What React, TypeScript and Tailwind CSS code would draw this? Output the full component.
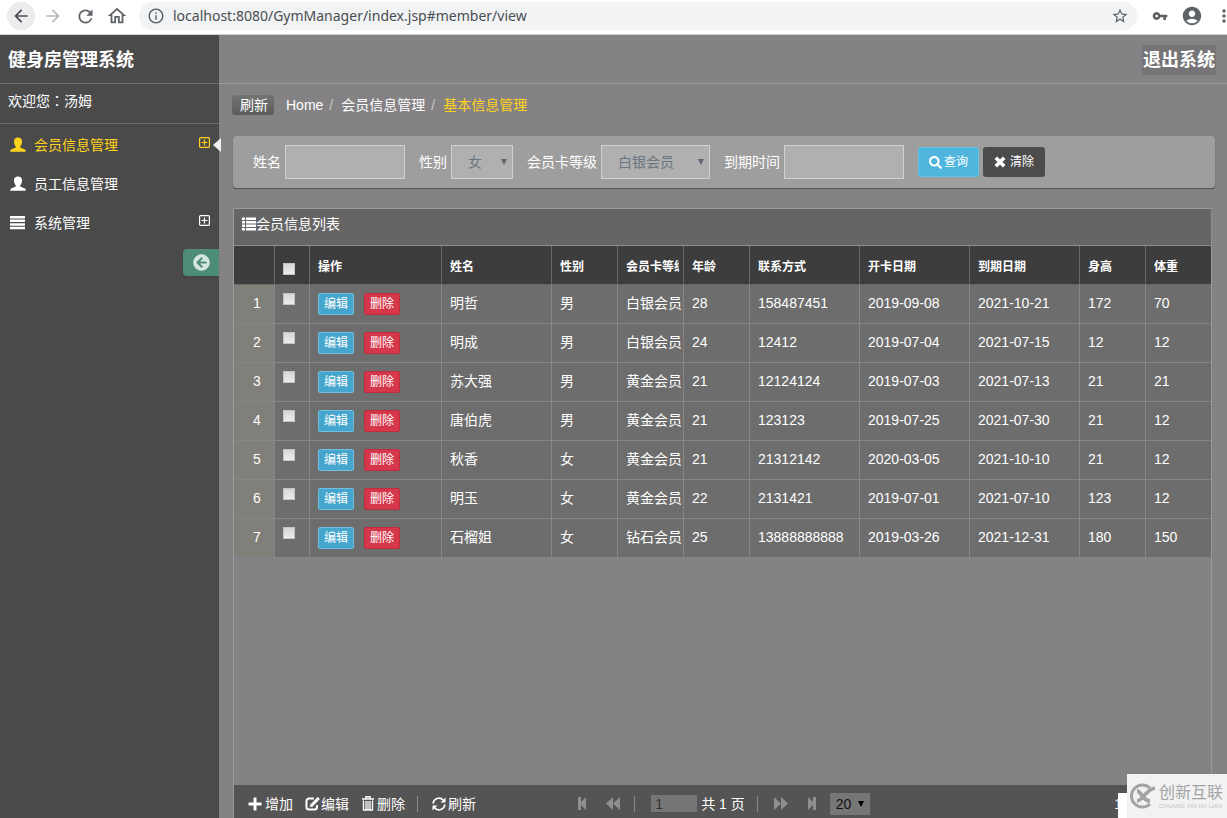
import { useState } from "react";
import type { ReactNode } from "react";
import {
  MdAccountCircle,
  MdArrowBack,
  MdArrowForward,
  MdInfoOutline,
  MdMoreVert,
  MdOutlineHome,
  MdRefresh,
  MdStarBorder,
  MdVpnKey,
} from "react-icons/md";
import { FaArrowCircleLeft, FaSearch } from "react-icons/fa";

interface Member {
  name: string;
  gender: string;
  level: string;
  age: number;
  phone: string;
  openDate: string;
  expireDate: string;
  height: number;
  weight: number;
}

const members: Member[] = [
  { name: "明哲", gender: "男", level: "白银会员", age: 28, phone: "158487451", openDate: "2019-09-08", expireDate: "2021-10-21", height: 172, weight: 70 },
  { name: "明成", gender: "男", level: "白银会员", age: 24, phone: "12412", openDate: "2019-07-04", expireDate: "2021-07-15", height: 12, weight: 12 },
  { name: "苏大强", gender: "男", level: "黄金会员", age: 21, phone: "12124124", openDate: "2019-07-03", expireDate: "2021-07-13", height: 21, weight: 21 },
  { name: "唐伯虎", gender: "男", level: "黄金会员", age: 21, phone: "123123", openDate: "2019-07-25", expireDate: "2021-07-30", height: 21, weight: 12 },
  { name: "秋香", gender: "女", level: "黄金会员", age: 21, phone: "21312142", openDate: "2020-03-05", expireDate: "2021-10-10", height: 21, weight: 12 },
  { name: "明玉", gender: "女", level: "黄金会员", age: 22, phone: "2131421", openDate: "2019-07-01", expireDate: "2021-07-10", height: 123, weight: 12 },
  { name: "石榴姐", gender: "女", level: "钻石会员", age: 25, phone: "13888888888", openDate: "2019-03-26", expireDate: "2021-12-31", height: 180, weight: 150 },
];

const columns = [
  { label: "姓名", width: "w-[110px]" },
  { label: "性别", width: "w-[66px]" },
  { label: "会员卡等级", width: "w-[66px]" },
  { label: "年龄", width: "w-[66px]" },
  { label: "联系方式", width: "w-[110px]" },
  { label: "开卡日期", width: "w-[110px]" },
  { label: "到期日期", width: "w-[110px]" },
  { label: "身高", width: "w-[66px]" },
  { label: "体重", width: "" },
];

const UserIcon = () => (
  <svg viewBox="0 0 16 16" className="size-4" fill="currentColor">
    <path d="M8 .5C5.400.500 4 2 4 4.300c0 2 .5 3.900 1.600 5 .4.500.3 1.100-.3 1.400L1.600 12.300C.8 12.700.3 13.300.3 14v.700h15.400V14c0-.7-.5-1.300-1.300-1.700l-3.700-1.600c-.6-.3-.7-.9-.3-1.400 1.100-1.100 1.600-3 1.600-5C12 2 10.600.5 8 .5z" />
  </svg>
);

const LinesIcon = () => (
  <svg viewBox="0 0 16 16" className="size-4" fill="currentColor">
    <path d="M0 1h15v2.500H0zM0 4.600h15v2.500H0zM0 8.200h15v2.500H0zM0 11.800h15v2.500H0z" />
  </svg>
);

const ListIcon = () => (
  <svg viewBox="0 0 14 14" className="h-3.5 w-3.5" fill="currentColor">
    <path d="M0 .5h3v2.500H0zM4 .5h10v2.500H4zM0 4h3v2.500H0zM4 4h10v2.500H4zM0 7.500h3v2.500H0zM4 7.500h10v2.500H4zM0 11h3v2.500H0zM4 11h10v2.500H4z" />
  </svg>
);

const ExpandIcon = () => (
  <svg viewBox="0 0 11 11" className="size-[11px]" fill="none" stroke="currentColor" strokeWidth="1.200">
    <rect x=".6" y=".6" width="9.800" height="9.800" rx="1" />
    <path d="M5.500 2.500v6M2.500 5.500h6" />
  </svg>
);

const CrossIcon = () => (
  <svg viewBox="0 0 12 12" className="size-3" stroke="currentColor" strokeWidth="3.600">
    <path d="M1.800 1.800l8.400 8.400M10.200 1.800l-8.400 8.400" />
  </svg>
);

const PlusIcon = () => (
  <svg viewBox="0 0 14 14" className="size-3.5" fill="currentColor">
    <path d="M5.500.500h3v5H13.500v3H8.500v5h-3v-5H.5v-3h5z" />
  </svg>
);

const EditIcon = () => (
  <svg viewBox="0 0 16 14" className="h-3.5 w-4" fill="none" stroke="currentColor" strokeWidth="2">
    <path d="M9 1.500H4A2.500 2.500 0 001.500 4v6A2.500 2.500 0 004 12.500h5.500A2.500 2.500 0 0012 10V8" />
    <path d="M7 8L13.800 1" strokeWidth="3" />
    <path d="M4.800 10.300l.9-3.700 2.800 2.600z" fill="currentColor" stroke="none" />
  </svg>
);

const TrashIcon = () => (
  <svg viewBox="0 0 14 16" className="h-4 w-3.5" fill="none" stroke="currentColor">
    <path d="M1 3h12M5 2.500V.8h4v1.700" strokeWidth="1.500" />
    <path d="M2.500 4.500v9.500h9V4.500M5 5v8.500M7 5v8.500M9 5v8.500" strokeWidth="1.300" />
  </svg>
);

const SyncIcon = () => (
  <svg viewBox="0 0 14 14" className="size-3.5" fill="none" stroke="currentColor" strokeWidth="1.800">
    <path d="M1.200 6.500A5.800 5.800 0 0111.200 3M12.800 7.500A5.800 5.800 0 012.800 11" />
    <path d="M13.500.5v5h-5zM.5 13.500v-5h5z" fill="currentColor" stroke="none" />
  </svg>
);

const pagerPaths = {
  first: "M2 0h3v5l5-5v13L5 8v5H2z",
  prev: "M7 0v13L0 6.500zM14 0v13L7 6.500z",
  next: "M0 0v13l7-6.500zM7 0v13l7-6.500z",
  last: "M12 0H9v5L4 0v13l5-5v5h3z",
};

function PagerButton({ kind, label }: { kind: keyof typeof pagerPaths; label: string }) {
  return (
    <button type="button" aria-label={label} className="text-[#8f8f8f]">
      <svg viewBox="0 0 14 13" className="h-[13px] w-3.5" fill="currentColor">
        <path d={pagerPaths[kind]} />
      </svg>
    </button>
  );
}

function BrowserButton({ label, className = "text-[#5f6368]", children }: { label: string; className?: string; children: ReactNode }) {
  return (
    <button
      type="button"
      aria-label={label}
      className={`flex size-7 shrink-0 items-center justify-center rounded-full ${className}`}
    >
      {children}
    </button>
  );
}

function BrowserBar() {
  return (
    <div className="flex h-[35px] shrink-0 items-start border-b border-[#d0d0d0] bg-white pt-0.5 pl-[7px]">
      <div className="flex gap-1">
        <BrowserButton label="后退" className="bg-[#ececee] text-[#4b4e52]">
          <MdArrowBack size={20} />
        </BrowserButton>
        <BrowserButton label="前进" className="text-[#b5b7ba]">
          <MdArrowForward size={20} />
        </BrowserButton>
        <BrowserButton label="重新加载">
          <MdRefresh size={21} />
        </BrowserButton>
        <BrowserButton label="主页">
          <MdOutlineHome size={22} />
        </BrowserButton>
      </div>
      <div className="ml-2 flex h-7 min-w-0 flex-1 items-center rounded-full bg-[#f1f3f4] px-2 text-[#5f6368]">
        <MdInfoOutline size={18} className="shrink-0" />
        <input
          aria-label="地址"
          defaultValue="localhost:8080/GymManager/index.jsp#member/view"
          className="ml-2 min-w-0 flex-1 bg-transparent font-['Noto_Sans','Open_Sans',sans-serif] text-sm text-[#4a4d51] outline-none"
        />
        <MdStarBorder size={18} className="shrink-0" />
      </div>
      <div className="flex w-[90px] shrink-0 gap-1 overflow-hidden pl-[9px]">
        <BrowserButton label="密码">
          <MdVpnKey size={16} />
        </BrowserButton>
        <BrowserButton label="账户">
          <MdAccountCircle size={22} />
        </BrowserButton>
        <BrowserButton label="更多">
          <MdMoreVert size={20} />
        </BrowserButton>
      </div>
    </div>
  );
}

function Sidebar() {
  const items = [
    { label: "会员信息管理", icon: <UserIcon />, active: true, expandable: true },
    { label: "员工信息管理", icon: <UserIcon />, active: false, expandable: false },
    { label: "系统管理", icon: <LinesIcon />, active: false, expandable: true },
  ];

  return (
    <aside className="w-[219px] shrink-0 bg-[#4a4a4a]">
      <h1 className="flex h-[49px] items-center border-b border-[#6e6e6e] px-2 pt-0.5 text-lg font-bold">
        健身房管理系统
      </h1>
      <p className="h-10 border-b border-[#6a6a6a] px-2 pt-1 leading-6">
        欢迎您<span className="font-['Noto_Sans_CJK_TC',sans-serif]">：</span>汤姆
      </p>
      <nav className="pt-px">
        {items.map((item) => (
          <a
            key={item.label}
            href="#member/view"
            className={`relative flex h-[39px] items-center pr-[9px] pl-2.5 ${item.active ? "text-[#ffd21c]" : "text-white"}`}
          >
            {item.icon}
            <span className="ml-2 flex-1">{item.label}</span>
            {item.expandable && (
              <span className="pb-1">
                <ExpandIcon />
              </span>
            )}
            {item.active && (
              <svg viewBox="0 0 8 14" className="absolute -right-0.5 h-3.5 w-2" fill="#f0f0f0">
                <path d="M8 0v14L0 7z" />
              </svg>
            )}
          </a>
        ))}
      </nav>
      <div className="mt-[7px] flex justify-end">
        <button
          type="button"
          aria-label="收起菜单"
          className="flex h-[27px] w-9 items-center justify-center rounded-l bg-[#4d8c78] text-[#d5e5df] shadow-sm"
        >
          <FaArrowCircleLeft size={17} />
        </button>
      </div>
    </aside>
  );
}

function SelectBox({ id, className, options }: { id: string; className: string; options: string[] }) {
  return (
    <div className={`relative ${className}`}>
      <select
        id={id}
        className="h-[34px] w-full appearance-none border border-[#d0d0d0] bg-[#b0b0b0] pl-4 text-[#6b757f] outline-none"
      >
        {options.map((option) => (
          <option key={option}>{option}</option>
        ))}
      </select>
      <svg viewBox="0 0 6 6" className="pointer-events-none absolute top-3.5 right-1.5 size-1.5" fill="#5c6670">
        <path d="M0 0h6L3 6z" />
      </svg>
    </div>
  );
}

function SearchForm() {
  const inputClass = "h-[34px] w-[120px] border border-[#d0d0d0] bg-[#b0b0b0] px-3 outline-none";

  return (
    <form
      onSubmit={(event) => event.preventDefault()}
      className="mt-[21px] mr-3 ml-3.5 flex h-[52px] items-center gap-3.5 rounded-[4px] bg-[#9e9e9e] pl-5 shadow-[0_1px_1px_#505050]"
    >
      <div className="flex items-center gap-1">
        <label htmlFor="name">姓名</label>
        <input id="name" className={inputClass} />
      </div>
      <div className="flex items-center gap-1">
        <label htmlFor="gender">性别</label>
        <SelectBox id="gender" className="w-[62px]" options={["女", "男"]} />
      </div>
      <div className="flex items-center gap-1">
        <label htmlFor="level">会员卡等级</label>
        <SelectBox id="level" className="w-[109px]" options={["白银会员", "黄金会员", "钻石会员"]} />
      </div>
      <div className="flex items-center gap-1">
        <label htmlFor="expire">到期时间</label>
        <input id="expire" className={inputClass} />
      </div>
      <div className="flex gap-1">
        <button
          type="submit"
          className="flex h-[30px] w-[61px] items-center justify-center gap-0.5 rounded-[3px] border border-[#62c3ea] bg-[#50b5dc] text-xs"
        >
          <FaSearch size={13} />
          查询
        </button>
        <button
          type="reset"
          className="flex h-[30px] w-[62px] items-center justify-center gap-1 rounded-[3px] bg-[#4c4c4c] text-xs"
        >
          <CrossIcon />
          清除
        </button>
      </div>
    </form>
  );
}

const checkClass =
  "block size-3 appearance-none border border-[#c4c4c4] bg-linear-to-b from-[#d6d6d6] to-[#ececec] checked:bg-[#50b5dc] checked:bg-none";

function MemberTable() {
  const [selected, setSelected] = useState<number[]>([]);
  const allSelected = selected.length === members.length;

  const toggle = (index: number) => {
    setSelected((prev) =>
      prev.includes(index) ? prev.filter((i) => i !== index) : [...prev, index]
    );
  };

  return (
    <table className="w-full table-fixed border-separate border-spacing-0 text-left [&_td]:border-r [&_td]:border-b [&_td]:border-[#868686] [&_td:last-child]:border-r-0 [&_th]:border-r [&_th]:border-b [&_th]:border-[#6a6a6a] [&_th:last-child]:border-r-0">
      <thead className="bg-[#3d3d3d] text-xs font-bold">
        <tr className="h-[39px]">
          <th className="w-[41px]" />
          <th className="w-[35px] pt-2 pl-2">
            <input
              type="checkbox"
              aria-label="全选"
              checked={allSelected}
              onChange={() => setSelected(allSelected ? [] : members.map((_, i) => i))}
              className={checkClass}
            />
          </th>
          <th className="w-[132px] px-2 pt-1">操作</th>
          {columns.map((column) => (
            <th key={column.label} className={`px-2 pt-1 ${column.width}`}>
              <div className="-mr-1 overflow-hidden whitespace-nowrap">{column.label}</div>
            </th>
          ))}
        </tr>
      </thead>
      <tbody className="bg-[#6d6d6d]">
        {members.map((member, index) => (
          <tr key={member.phone} className="h-[39px] [&>td]:pb-0.5">
            <td className="bg-[#807f7a] pl-1.5 text-center">{index + 1}</td>
            <td className="pt-2 pl-2 align-top">
              <input
                type="checkbox"
                aria-label={`选择${member.name}`}
                checked={selected.includes(index)}
                onChange={() => toggle(index)}
                className={checkClass}
              />
            </td>
            <td className="px-2 pt-0.5">
              <div className="flex gap-2.5 text-xs">
                <button type="button" className="h-[22px] w-9 rounded-[2px] border border-[#6fc0e0] bg-[#45a5cc]">
                  编辑
                </button>
                <button type="button" className="h-[22px] w-9 rounded-[2px] border border-[#c02b3e] bg-[#d5374b]">
                  删除
                </button>
              </div>
            </td>
            <td className="px-2">{member.name}</td>
            <td className="px-2">{member.gender}</td>
            <td className="overflow-hidden pl-2 whitespace-nowrap">{member.level}</td>
            <td className="px-2">{member.age}</td>
            <td className="px-2">{member.phone}</td>
            <td className="px-2">{member.openDate}</td>
            <td className="px-2">{member.expireDate}</td>
            <td className="px-2">{member.height}</td>
            <td className="px-2">{member.weight}</td>
          </tr>
        ))}
      </tbody>
    </table>
  );
}

function GridFooter() {
  return (
    <div className="flex h-[33px] shrink-0 items-center bg-[#545454] pt-1">
      <div className="flex w-1/3 items-center gap-3 pl-3.5">
        <button type="button" className="flex items-center gap-[3px]">
          <PlusIcon />
          增加
        </button>
        <button type="button" className="flex items-center">
          <EditIcon />
          编辑
        </button>
        <button type="button" className="flex items-center gap-0.5">
          <TrashIcon />
          删除
        </button>
        <span className="h-4 w-px bg-[#8a8a8a]" />
        <button type="button" className="ml-0.5 flex items-center gap-0.5">
          <SyncIcon />
          刷新
        </button>
      </div>
      <div className="flex w-1/3 items-center justify-center gap-4">
        <PagerButton kind="first" label="首页" />
        <PagerButton kind="prev" label="上一页" />
        <span className="-ml-0.5 h-4 w-px bg-[#8a8a8a]" />
        <label className="flex items-center gap-1 whitespace-nowrap">
          <input
            aria-label="页码"
            defaultValue="1"
            className="h-[17px] w-[46px] bg-[#767676] px-1 text-[#333] outline-none"
          />
          共 1 页
        </label>
        <span className="-ml-1 h-4 w-px bg-[#8a8a8a]" />
        <PagerButton kind="next" label="下一页" />
        <PagerButton kind="last" label="末页" />
        <div className="relative -ml-1">
          <select
            aria-label="每页条数"
            className="h-[22px] w-10 appearance-none bg-[#767676] pl-1.5 text-[#111] outline-none"
          >
            <option>20</option>
            <option>50</option>
          </select>
          <svg viewBox="0 0 6 6" className="pointer-events-none absolute top-2 right-1.5 size-1.5" fill="#000">
            <path d="M0 0h6L3 6z" />
          </svg>
        </div>
      </div>
      <div className="flex w-1/3 justify-end pr-[90px]">1</div>
    </div>
  );
}

function Watermark() {
  return (
    <div className="fixed right-0 bottom-0 flex items-end">
      <div className="h-[25px] w-[9px] bg-white" />
      <div className="flex h-11 w-[100px] items-center gap-0.5 bg-[#f2f2f2] pl-0.5 text-[#a3a3a3]">
        <svg viewBox="0 0 28 26" className="h-[26px] w-7 shrink-0" fill="none" stroke="currentColor">
          <path d="M21 5A11 11 0 1021 21" strokeWidth="3" />
          <path d="M8 8c4 0 6 10 13 10" strokeWidth="4" />
          <path d="M8 18c6 0 8-11 18-13" strokeWidth="3.500" />
        </svg>
        <div className="whitespace-nowrap">
          <div className="text-base leading-5">创新互联</div>
          <div className="text-[6px] leading-[6px] text-[#c4c4c4]">CHUANG XIN HU LIAN</div>
        </div>
      </div>
    </div>
  );
}

export default function App() {
  return (
    <div className="flex h-screen flex-col overflow-hidden font-['Liberation_Sans','Noto_Sans_CJK_SC',sans-serif] text-sm text-white">
      <BrowserBar />
      <div className="flex min-h-0 flex-1">
        <Sidebar />
        <main className="flex min-w-0 flex-1 flex-col bg-[#848284]">
          <header className="flex h-[49px] shrink-0 items-center justify-end border-b border-[#9b9b9b] pt-0.5 pr-[11px]">
            <button type="button" className="h-[30px] bg-[#767476] px-px text-lg font-bold">
              退出系统
            </button>
          </header>
          <div className="mt-2.5 flex h-[21px] shrink-0 items-center pl-[13px]">
            <button
              type="button"
              className="mr-3 h-5 w-[42px] rounded-[3px] bg-linear-to-b from-[#737373] to-[#5c5c5c] pl-0.5 leading-5"
            >
              刷新
            </button>
            <nav className="flex items-center">
              <a href="#home">Home</a>
              <span className="mr-2 ml-1.5 text-[#c8c8c8]">/</span>
              <a href="#member">会员信息管理</a>
              <span className="mr-2 ml-1.5 text-[#c8c8c8]">/</span>
              <a href="#member/view" className="text-[#ffd21c]">
                基本信息管理
              </a>
            </nav>
          </div>
          <SearchForm />
          <section className="mt-5 mr-[15px] ml-3.5 flex min-h-0 flex-1 flex-col border-t border-l border-[#9a9a9a]">
            <h2 className="flex h-[37px] shrink-0 items-center border-r border-b border-[#8c8c8c] bg-[#656565] pb-1.5 pl-2">
              <ListIcon />
              会员信息列表
            </h2>
            <div className="min-h-0 flex-1 overflow-hidden border-r border-[#9a9a9a]">
              <MemberTable />
            </div>
            <GridFooter />
          </section>
        </main>
      </div>
      <Watermark />
    </div>
  );
}
